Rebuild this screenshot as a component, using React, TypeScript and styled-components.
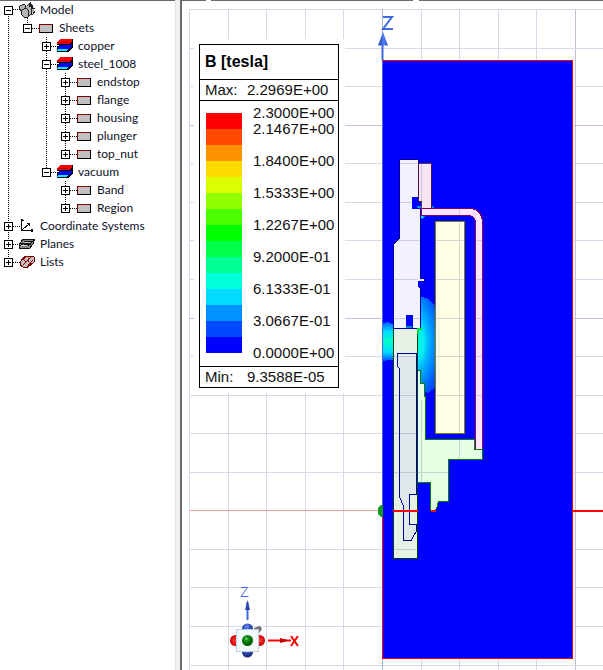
import React from "react";
import styled, { createGlobalStyle } from "styled-components";

const Global = createGlobalStyle`
  html, body, #root { height: 100%; margin: 0; }
  * { box-sizing: border-box; }
  body { background: #fff; overflow: hidden; }
`;

const Workspace = styled.div`
  display: flex;
  height: 100%;
  color: #101028;
`;

const TreePanel = styled.nav`
  flex: 0 0 175px;
  border-top: 1px solid #696969;
  background: #fff;
`;

const Splitter = styled.div`
  flex: 0 0 7px;
  background: #f0f0f0;
  border-left: 1px solid #e3e3e3;
  border-right: 2px solid #696969;
`;

const Branch = styled.ul`
  list-style: none;
  margin: 0;
  padding: 0;
`;

const Row = styled.div<{ $depth: number }>`
  display: flex;
  align-items: center;
  height: 18px;
  padding-left: ${(p) => 4 + p.$depth * 19}px;
`;

const Guides = styled.svg`
  position: absolute;
  left: 0;
  top: 0;
  pointer-events: none;
`;

const TreeArea = styled.div`
  position: relative;
`;

const Toggle = styled.button`
  position: relative;
  width: 9px;
  height: 9px;
  padding: 0;
  border: 0;
  background: #fff;
  line-height: 0;
`;

const IconSlot = styled.span`
  display: flex;
  position: relative;
  width: 19px;
  height: 18px;
  margin-left: 5px;
`;

const Label = styled.span`
  margin-left: 3px;
  font-size: 12px;
  line-height: 18px;
  font-family: Lato, "Noto Sans", sans-serif;
  white-space: nowrap;
`;

type Kind = "model" | "sheet" | "material" | "axes" | "planes" | "lists";
type Node = { name: string; kind: Kind; children?: Node[] };

const sheets = (...names: string[]): Node[] => names.map((name) => ({ name, kind: "sheet" }));

const tree: Node[] = [
  {
    name: "Model",
    kind: "model",
    children: [
      {
        name: "Sheets",
        kind: "sheet",
        children: [
          { name: "copper", kind: "material" },
          {
            name: "steel_1008",
            kind: "material",
            children: sheets("endstop", "flange", "housing", "plunger", "top_nut"),
          },
          { name: "vacuum", kind: "material", children: sheets("Band", "Region") },
        ],
      },
    ],
  },
  { name: "Coordinate Systems", kind: "axes" },
  { name: "Planes", kind: "planes" },
  { name: "Lists", kind: "lists" },
];

function KindIcon({ kind }: { kind: Kind }) {
  return (
    <svg width="19" height="18" viewBox="0 0 19 18" shapeRendering="crispEdges" aria-hidden="true">
      {kind === "sheet" && (
        <>
          <rect x="2" y="5" width="14" height="9" fill="#000" />
          <path d="M2 5H15V6H3V13H2Z" fill="#800000" />
          <rect x="3" y="6" width="12" height="7" fill="#c0c0c0" />
        </>
      )}
      {kind === "material" && (
        <>
          <path d="M4 2H17V10L12 15H1V11L3 8H1V5Z" fill="#000" />
          <path d="M2 12H12L11 14H1Z" fill="#00f0ff" />
          <path d="M4 8H16V9L13 12H2V11Z" fill="#00f" />
          <path d="M4 2H16V5L13 7H1V5Z" fill="#f00" />
          <path d="M2 5H12V6H2Z" fill="#a00000" />
        </>
      )}
      {kind === "model" && (
        <>
          <path d="M2 5L6 3L9 5L10 3L12 1L14 4L16 7V11L13 13L10 16H6L3 13V10L1 8Z" fill="#b4b4b4" />
          <path d="M1 8L2 5L6 3L8 5L7 8M1 8L4 10M3 9V13L6 16H10L13 13H15L17 10M10 9V16M12 1V4M12 2L9 5M12 2L15 5M14 4V7L17 8M13 4V13M4 9L8 7L10 9" fill="none" stroke="#222" />
          <path d="M11 3H13V6H11Z" fill="#222" />
        </>
      )}
      {kind === "axes" && (
        <>
          <path d="M3.500 2V13.500H15M4 13L11 7" fill="none" stroke="#111" />
          <path d="M2 4L4 2L6 4H4Z M9 6H12V9H11Z M13 12H15V15H13Z" fill="#111" />
        </>
      )}
      {kind === "planes" && (
        <>
          <path d="M5 4H16V6L15 9L12 13H1V10L3 7Z" fill="#888" stroke="#111" />
          <path d="M3 8H13L16 5M6 6H14M2 11L7 7H12L10 11M6 9H13" fill="none" stroke="#111" />
          <path d="M6 7.500H12M3 10.500H9" stroke="#ccc" />
        </>
      )}
      {kind === "lists" && (
        <>
          <path d="M7 3H13L16 4V9L10 14H5L2 12V9Z" fill="#c0c0c0" stroke="#700000" />
          <path d="M2 9L9 3M5 12L13 4M9 14L15 7M5 6L8 9M10 5V9" fill="none" stroke="#900000" />
        </>
      )}
    </svg>
  );
}

function TreeNode({ node, depth }: { node: Node; depth: number }) {
  const open = !!node.children;
  return (
    <li>
      <Row $depth={depth}>
        <Toggle aria-label={(open ? "Collapse " : "Expand ") + node.name}>
          <svg width="9" height="9" shapeRendering="crispEdges" aria-hidden="true">
            <path d={open ? "M.5 .5H8.500V8.500H.5ZM2 4.500H7" : "M.5 .5H8.500V8.500H.5ZM2 4.500H7M4.500 2V7"} fill="#fff" stroke="#000" />
          </svg>
        </Toggle>
        <IconSlot><KindIcon kind={node.kind} /></IconSlot>
        <Label>{node.name}</Label>
      </Row>
      {node.children && (
        <Branch>
          {node.children.map((child) => <TreeNode key={child.name} node={child} depth={depth + 1} />)}
        </Branch>
      )}
    </li>
  );
}

const Viewport = styled.main`
  flex: 1;
  min-width: 0;
  position: relative;
  background: #fff;
  overflow: hidden;
`;

const Scene = styled.svg`
  display: block;
`;

const LegendHalo = styled.section`
  position: absolute;
  left: 12px;
  top: 39px;
  padding: 5px 6px 5px 5px;
  background: #fff;
  font-family: "Liberation Sans", Arial, sans-serif;
  color: #111;
`;

const LegendBox = styled.div`
  width: 140px;
  border: 1px solid #000;
`;

const LegendTitle = styled.h2`
  margin: 0;
  padding-left: 5px;
  font-size: 16px;
  line-height: 34px;
  color: #000;
  border-bottom: 1px solid #000;
`;

const Extreme = styled.div`
  display: grid;
  grid-template-columns: 42px 1fr;
  padding-left: 5px;
  font-size: 15px;
  line-height: 20px;
`;

const Scale = styled.div`
  display: flex;
  gap: 11px;
  padding: 4px 0 5px 6px;
  border-top: 1px solid #000;
  border-bottom: 1px solid #000;
`;

const Ramp = styled.div`
  width: 36px;
  padding: 8px 0;
`;

const Swatch = styled.div<{ $color: string }>`
  height: 16px;
  background: ${(p) => p.$color};
`;

const Ticks = styled.div`
  display: grid;
  grid-auto-rows: 16px;
`;

const Tick = styled.span<{ $row: number }>`
  grid-row: ${(p) => p.$row + 1};
  font-size: 15px;
  line-height: 16px;
`;

const ramp = ["#ff0000", "#ff4900", "#ff9200", "#ffdb00", "#dbff00", "#92ff00", "#49ff00", "#00ff00", "#00ff49", "#00ff92", "#00ffdb", "#00dbff", "#0092ff", "#0049ff", "#0000ff"];
const ticks: [number, string][] = [
  [0, "2.3000E+00"], [1, "2.1467E+00"], [3, "1.8400E+00"], [5, "1.5333E+00"], [7, "1.2267E+00"],
  [9, "9.2000E-01"], [11, "6.1333E-01"], [13, "3.0667E-01"], [15, "0.0000E+00"],
];

function Legend() {
  return (
    <LegendHalo aria-label="Field scale">
      <LegendBox>
        <LegendTitle>B [tesla]</LegendTitle>
        <Extreme><span>Max:</span><span>2.2969E+00</span></Extreme>
        <Scale>
          <Ramp>{ramp.map((c) => <Swatch key={c} $color={c} />)}</Ramp>
          <Ticks>{ticks.map(([row, text]) => <Tick key={row} $row={row}>{text}</Tick>)}</Ticks>
        </Scale>
        <Extreme><span>Min:</span><span>9.3588E-05</span></Extreme>
      </LegendBox>
    </LegendHalo>
  );
}

const gridX = [189, 228, 266, 305, 343, 382, 421, 459, 498, 536, 575];
const gridY = [9, 48, 86, 125, 163, 202, 240, 279, 318, 356, 395, 433, 472, 510, 549, 587, 626, 665];
const isMajor = (v: number) => v === 125 || v === 318 || v === 575;

function GridLines() {
  return (
    <g shapeRendering="crispEdges">
      {gridX.map((x) => <rect key={x} x={x} y="9" width="1" height="2000" fill={isMajor(x) ? "#c2c2d6" : "#d8d8e8"} />)}
      {gridY.map((y) => <rect key={y} x="189" y={y} width="2000" height="1" fill={isMajor(y) ? "#c2c2e0" : "#d8d8e8"} />)}
    </g>
  );
}

function ModelView() {
  return (
    <Scene width="2000" height="2000" viewBox="182 0 2000 2000" role="img" aria-label="Flux density plot of a solenoid section">
      <defs>
        <radialGradient id="gap" gradientUnits="userSpaceOnUse" cx="0" cy="0" r="1" gradientTransform="translate(416 342) scale(25 58)">
          <stop offset="0" stopColor="#00ffdb" />
          <stop offset=".3" stopColor="#00f0f0" />
          <stop offset=".5" stopColor="#00b4ff" />
          <stop offset=".75" stopColor="#0080ff" />
          <stop offset="1" stopColor="#0049ff" />
        </radialGradient>
        <linearGradient id="core" x1="0" y1="0" x2="0" y2="1">
          <stop offset="0" stopColor="#0060ff" />
          <stop offset=".25" stopColor="#00dbff" />
          <stop offset=".5" stopColor="#00ffc8" />
          <stop offset=".78" stopColor="#00dbff" />
          <stop offset="1" stopColor="#0050ff" />
        </linearGradient>
        <radialGradient id="blueBall" cx=".45" cy=".3"><stop offset="0" stopColor="#7090ff" /><stop offset=".6" stopColor="#3050c0" /><stop offset="1" stopColor="#203080" /></radialGradient>
        <radialGradient id="greenBall" cx=".4" cy=".35"><stop offset="0" stopColor="#80d080" /><stop offset=".4" stopColor="#109010" /><stop offset="1" stopColor="#006000" /></radialGradient>
        <radialGradient id="redBall"><stop offset="0" stopColor="#ff4040" /><stop offset="1" stopColor="#d00000" /></radialGradient>
        <linearGradient id="cone"><stop offset="0" stopColor="#203a90" /><stop offset=".6" stopColor="#5080ff" /><stop offset="1" stopColor="#2a4ab0" /></linearGradient>
      </defs>
      <path d="M182 .5H206M211 .5H413M419 .5H2182" stroke="#696969" shapeRendering="crispEdges" />
      <GridLines />
      <g shapeRendering="crispEdges">
        <path d="M190 510.500H382" stroke="#e8a0a0" />
        <path d="M382.500 9V60M382.500 659V2000" stroke="#a8b4e0" />
        <rect x="382" y="60" width="191" height="599" fill="#00f" />
        <path d="M382 60.500H572.500V658.500H382.500V511" fill="none" stroke="#f00" />
        <path d="M382.500 61V510" stroke="#4868d8" />
        <path d="M573 511H2182" stroke="#f00" strokeWidth="2" />

        <path d="M383 323L388 322L394 325V360H389L383 361Z" fill="url(#core)" />
        <path d="M420 296L428 299L435 305V388L428 393L423 391L418 370V328H420Z" fill="url(#gap)" />
        <path d="M417 206L421 204L422 208H417ZM432 206L434 208H432ZM421 216H425L423 219H421Z" fill="#0092ff" />
        <path d="M419 206H421V208H419ZM421 216H423V218H421Z" fill="#00dbff" />

        <path d="M399.500 159.500H418.500V202L412.500 197.500V208.500H420.500V278.500H424.500V281.500H418.500V285.500L420.500 288.500V328.500H393.500V244L399.500 238Z" fill="#f1f1ff" stroke="#0000a0" />
        <path d="M412 197H419V202H421V209H412Z" fill="#00f" />
        <path d="M417 206H421V208H417Z" fill="#0092ff" />
        <path d="M418.500 163.500H431.500V208.500H421.500V201.500H418.500Z" fill="#f5e6f5" stroke="#501040" />
        <path d="M418 281H423V283H420V287H418Z" fill="#00f" />
        <rect x="406" y="315" width="7" height="13" fill="#00f" />
        <path d="M406 326H412V328H406Z" fill="#008cc0" />

        <path d="M421.500 208.500H470Q481 209 482.500 221V449.500H475.500V222Q475 216 469 215.500H421.500Z" fill="#ffe5ff" stroke="#800060" />
        <rect x="435.500" y="221.500" width="29" height="212" fill="#ffffe5" stroke="#808000" />
        <path d="M417.500 370.500H420.500V383.500H424.500V396L425.500 397V439.500H474.500V449.500H482.500V459.500H448.500V501.500H438.500L437 507L435.500 510.500H430.500V482.500H417.500Z" fill="#e5ffe5" stroke="#008000" />
        <rect x="393.500" y="328.500" width="24" height="230" fill="#e6f2e6" stroke="#004000" />
        <path d="M397.500 353.500H416.500V494.500H409.500V524.500H416.500V531L411 540.500H403.500V506L399.500 497V369L397.500 366Z" fill="#dfe9eb" stroke="#0000a8" />
        <path d="M394 328.500H421" stroke="#0000a0" />
        <path d="M417 328H422V330H419V334H417Z" fill="#00e030" />
        <path d="M393 511H418M431 511H436" stroke="#f00" strokeWidth="2" />
        <path d="M400 163.500H431M400 202.500H412M394 240.500H420M394 279.500H418M394 318.500H406M413 318.500H420M394 356.500H417M394 395.500H417M394 433.500H417M394 472.500H417M394 549.500H417M418 472.500H448M436 240.500H464M436 279.500H464M436 318.500H464M436 356.500H464M436 395.500H464M476 240.500H482M476 279.500H482M476 318.500H482M476 356.500H482M476 395.500H482M459.500 209V215M459.500 222V433M459.500 440V459M421.500 164V208M421.500 400V482" stroke="#7878a8" strokeOpacity=".3" fill="none" />
      </g>
      <path d="M382 505H381L378 508V514L381 517H383V505Z" fill="#109818" />

      <path d="M382.500 45V60" stroke="#4068e0" strokeWidth="2" />
      <path d="M383 32L388 45.500H378Z" fill="url(#cone)" />
      <path d="M383 17H392L383 29H393" fill="none" stroke="#4068e0" strokeWidth="2" />

      <path d="M241 587.500H247.500L241 596.500H248.500" fill="none" stroke="#4068e0" />
      <path d="M247.500 602V620" stroke="#4068e0" strokeWidth="2" />
      <path d="M245 610L247.500 600L250 610Z" fill="#2848a8" />
      <path d="M268 640.500H291" stroke="#f00" strokeWidth="2" />
      <path d="M280 638L289 640.500L280 643Z" fill="#c80000" />
      <path d="M291 636L298 646M298 636L291 646" stroke="#f00" strokeWidth="2" />
      <path d="M254 628L260 626L262 629L259 633L255 631Z" fill="#707070" />
      <circle cx="247.500" cy="629" r="5.500" fill="url(#blueBall)" />
      <circle cx="247.500" cy="652" r="5.500" fill="url(#blueBall)" />
      <circle cx="235.500" cy="640.500" r="5.500" fill="url(#redBall)" />
      <circle cx="259.500" cy="640.500" r="5.500" fill="url(#redBall)" />
      <rect x="236.500" y="629.500" width="22" height="22" fill="#f3fafc" stroke="#c0d0e0" />
      <circle cx="247.500" cy="640.500" r="5.500" fill="url(#greenBall)" />
    </Scene>
  );
}

export default function App() {
  return (
    <>
      <Global />
      <Workspace>
        <TreePanel aria-label="Model tree">
          <TreeArea>
            <Guides width="175" height="290" viewBox="0 1 175 290" shapeRendering="crispEdges" aria-hidden="true">
              <path d="M8.500 14V262M27.500 18V26M46.500 37V172M65.500 73V154M65.500 181V208M13 9.500H20M32 28.500H39M51 46.500H58M51 64.500H58M51 172.500H58M70 82.500H77M70 100.500H77M70 118.500H77M70 136.500H77M70 154.500H77M70 190.500H77M70 208.500H77M13 226.500H20M13 244.500H20M13 262.500H20" stroke="#000" strokeDasharray="1 1" fill="none" />
            </Guides>
            <Branch>
              {tree.map((node) => <TreeNode key={node.name} node={node} depth={0} />)}
            </Branch>
          </TreeArea>
        </TreePanel>
        <Splitter />
        <Viewport>
          <ModelView />
          <Legend />
        </Viewport>
      </Workspace>
    </>
  );
}
